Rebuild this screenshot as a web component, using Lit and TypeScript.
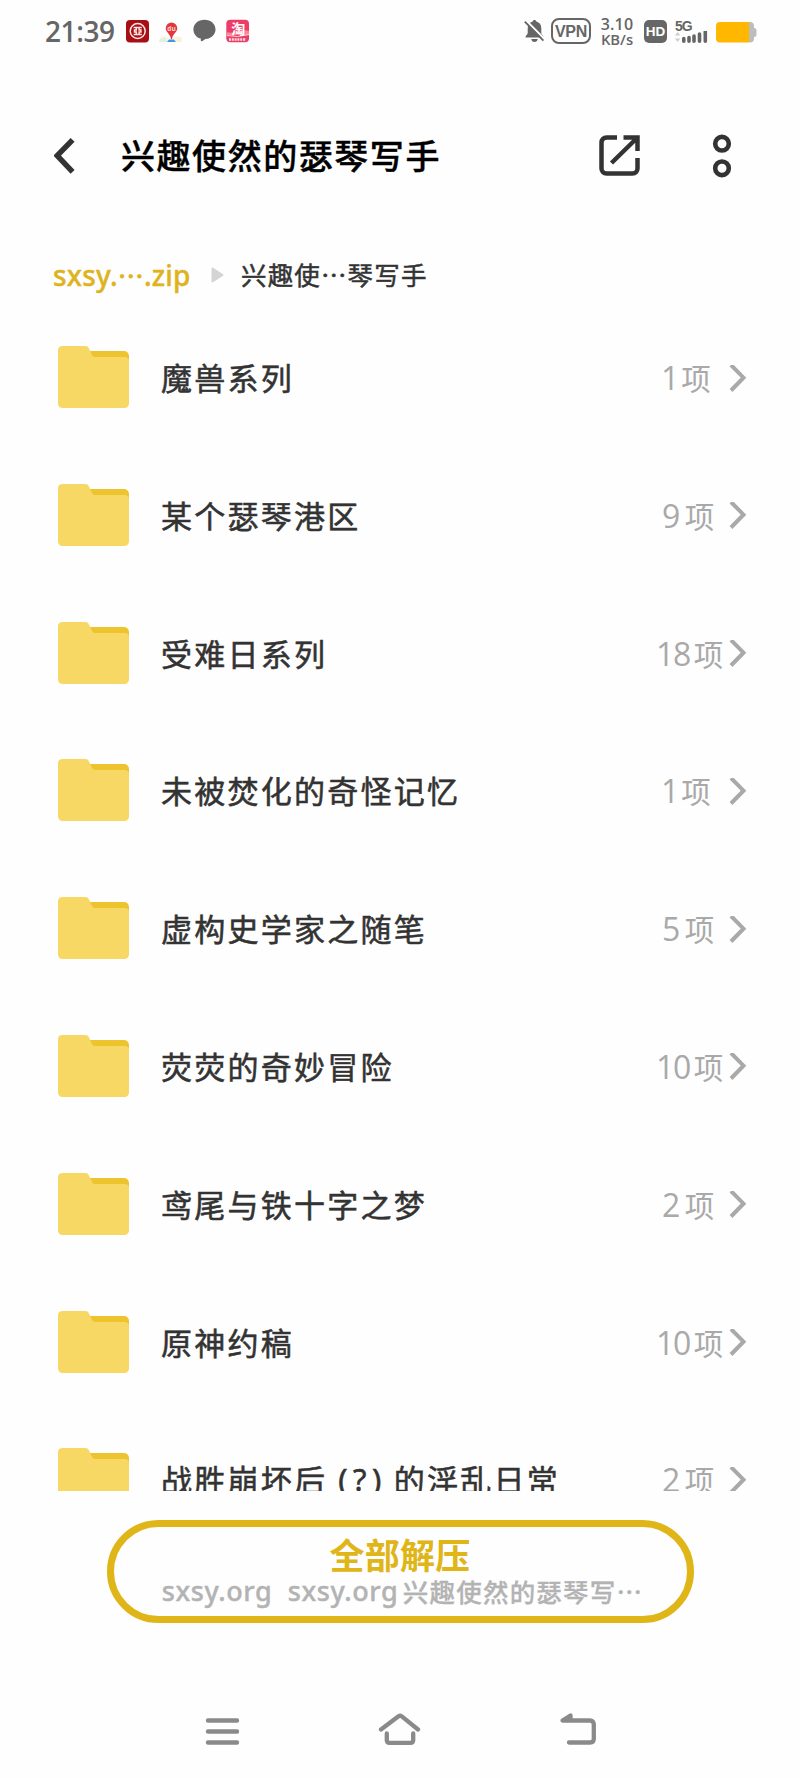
import { LitElement, html, css } from "lit";
import { customElement, property } from "lit/decorators.js";

interface Folder { name: string; note?: string; rest?: string; count: number; }

const FOLDERS: Folder[] = [
  { name: "魔兽系列", count: 1 },
  { name: "某个瑟琴港区", count: 9 },
  { name: "受难日系列", count: 18 },
  { name: "未被焚化的奇怪记忆", count: 1 },
  { name: "虚构史学家之随笔", count: 5 },
  { name: "荧荧的奇妙冒险", count: 10 },
  { name: "鸢尾与铁十字之梦", count: 2 },
  { name: "原神约稿", count: 10 },
  { name: "战胜崩坏后", note: "(?)", rest: "的淫乱日常", count: 2 },
];

@customElement("status-bar")
class StatusBar extends LitElement {
  static styles = css`
    :host { display: flex; align-items: flex-start; height: 64px; color: #666; font-family: "Open Sans", "Noto Sans", sans-serif; }
    svg { display: block; flex: none; }
    .time { width: 80px; margin: 12px 0 0 45px; font-size: 28px; line-height: 38px; font-weight: 600; letter-spacing: -0.4px; white-space: nowrap; }
    .icon { margin-top: 19px; }
    .bank { margin-left: 1px; }
    .map { margin-left: 9px; }
    .chat { margin-left: 10px; }
    .shop { margin-left: 10px; }
    .bell { margin-left: auto; }
    .vpn { box-sizing: border-box; flex: none; width: 40px; height: 26px; margin: 18px 0 0 6px; border: 2px solid #666; border-radius: 8px; font: 700 16px/23px "Liberation Sans", sans-serif; text-align: center; letter-spacing: -0.3px; }
    .speed { flex: none; width: 34px; margin: 17px 0 0 9px; font: 600 16px/14.5px "Open Sans", sans-serif; text-align: center; white-space: nowrap; }
    .speed div { height: 14.5px; }
    .rate { letter-spacing: 0.2px; }
    .unit { font-size: 14.8px; }
    .hd { flex: none; width: 23px; height: 23px; margin: 20px 0 0 10px; border-radius: 5px; background: #666; color: #fff; font: 700 13.5px/23px "Liberation Sans", sans-serif; text-align: center; }
    .cell { flex: none; width: 34px; margin: 19px 0 0 8px; }
    .gen { height: 12px; font: 700 14px/14px "Liberation Sans", sans-serif; letter-spacing: -1px; }
    .battery { margin: 21px 43px 0 6px; }
  `;
  render() {
    return html`
      <div class="time">21:39</div>
      <svg class="icon bank" width="24" height="24" viewBox="0 0 24 24">
        <rect x="0" y="1" width="23" height="22.500" rx="4" fill="#a80f14"/>
        <circle cx="11.700" cy="12" r="7.500" fill="none" stroke="#fbe6e6" stroke-width="1.500"/>
        <path d="M7.600 8.600h8.200M7.600 15.400h8.200M10.300 8.600v2.300h-1.800v2.200h1.800v2.300M13.100 8.600v2.300h1.800v2.200h-1.800v2.300" fill="none" stroke="#fbe6e6" stroke-width="1.500"/>
      </svg>
      <svg class="icon map" width="24" height="24" viewBox="0 0 24 24">
        <path d="M1 18l5-1 6 2 6-2 5 1v5H0z" fill="#f5f6f1"/>
        <path d="M1 20l5-2 3 5H0z" fill="#e3f0dd"/><path d="M16 18l6 1 1 4h-5z" fill="#f7f1d5"/>
        <path d="M10 20.500h5l2 2.500H8z" fill="#4a94dc"/>
        <path d="M12.500 3.500a5.800 5.800 0 0 1 5.800 5.800c0 4-4.400 5.300-5.300 10.700h-1c-.9-5.400-5.300-6.700-5.300-10.700a5.800 5.800 0 0 1 5.800-5.800z" fill="#e3383b"/>
        <text x="12.500" y="11.500" font-size="6.500" font-weight="700" text-anchor="middle" fill="#fbd5d5">du</text>
      </svg>
      <svg class="icon chat" width="23" height="24" viewBox="0 0 23 24">
        <path d="M11.500.8C17.800.8 22.500 5 22.500 10.400S17.500 19.500 12.800 20c-1 .1-2.300 1.700-4.200 2.300-.8.200-.9-.5-.8-2.700C3.400 18.500.4 14.800.4 10.400.4 5 5.200.8 11.500.8z" fill="#666"/>
      </svg>
      <svg class="icon shop" width="24" height="24" viewBox="0 0 24 24">
        <rect x=".3" y=".8" width="22.700" height="22.500" rx="4" fill="#ed3c68"/>
        <path d="M.5 13C8 16 15 9 23 12v4H.5z" fill="#f58a96"/>
        <path d="M1 16.500Q11 19 23 15.500" fill="none" stroke="#ffd2ce" stroke-width="1"/>
        <text x="12.300" y="14.500" font-family="Noto Sans CJK SC" font-size="14" font-weight="700" text-anchor="middle" fill="#fff">淘</text>
        <path d="M3 20.500h17" stroke="#ffdbe0" stroke-width="2.400" stroke-dasharray="2 .8"/>
      </svg>
      <svg class="icon bell" width="21" height="24" viewBox="0 0 21 24">
        <path d="M10.500 1c1 0 1.700.6 1.900 1.600 3 .8 4.900 3.200 4.900 6.400v5.400l2.100 3.100c.3.500 0 1.100-.6 1.100H2.200c-.6 0-.9-.6-.6-1.100l2.100-3.100V9c0-3.200 1.900-5.600 4.900-6.400.2-1 .9-1.600 1.900-1.600zM7.200 20h6.600c-.4 1.900-1.600 3-3.300 3s-2.900-1.100-3.300-3z" fill="#666"/>
        <path d="M2 1.500l19 19" stroke="#fefefe" stroke-width="2.200"/>
        <path d="M.8 2.600l18.600 19" stroke="#666" stroke-width="1.900"/>
      </svg>
      <div class="vpn">VPN</div>
      <div class="speed"><div class="rate">3.10</div><div class="unit">KB/s</div></div>
      <div class="hd">HD</div>
      <div class="cell">
        <div class="gen">5G</div>
        <svg width="34" height="13" viewBox="0 0 34 13">
          <path d="M0 4.500L2.600 1l2.600 3.500zM0 7.500h5.200L2.600 11z" fill="#ccc"/>
          <path d="M8.800 7.500v2.700M14 6.500v3.700M19 5v5.200M24.500 3v7.200M30.300.800v9.400" stroke="#666" stroke-width="3.600" stroke-linecap="round"/>
        </svg>
      </div>
      <svg class="battery" width="42" height="23" viewBox="0 0 42 23">
        <path d="M34 1h1a4 4 0 0 1 4 4v2c2 .2 2.500 1 2.500 2.500v4c0 1.500-.5 2.300-2.500 2.500v1.500a4 4 0 0 1-4 4h-1z" fill="#bdbdbd"/>
        <path d="M5 1h29v20.500H5a4 4 0 0 1-4-4V5a4 4 0 0 1 4-4z" fill="#ffb700"/>
      </svg>`;
  }
}

@customElement("folder-row")
class FolderRow extends LitElement {
  @property({ attribute: false }) folder!: Folder;
  static styles = css`
    :host { display: flex; align-items: flex-start; height: 137.8px; flex: none; }
    svg { display: block; flex: none; }
    .name { display: flex; flex: 1; margin: 8px 0 0 31px; color: #333; font: 400 31px/46px "Noto Sans CJK SC", sans-serif; letter-spacing: 2.25px; white-space: nowrap; -webkit-text-stroke: 0.55px #333; }
    .note { padding: 0 7px 0 11px; letter-spacing: 5.5px; font-family: "Noto Sans", "Noto Sans CJK SC", sans-serif; }
    .count { display: flex; width: 67px; margin-top: 8px; color: #a9a9a9; line-height: 46px; white-space: nowrap; }
    .wide { width: 73px; }
    .num { padding-top: 1px; font-family: "Open Sans", sans-serif; font-size: 32px; margin-right: 4.5px; }
    .unit { font-family: "Noto Sans CJK SC", sans-serif; font-size: 29.5px; }
    .wide .num { letter-spacing: -1.2px; margin-right: 3.5px; }
    .one { margin-left: -1px; margin-right: 2px; }
    .next { margin: 18.5px 53px 0 0; }
  `;
  render() {
    const f = this.folder;
    return html`
      <svg width="73" height="64" viewBox="0 0 73 64">
        <path d="M30 5h37a5 5 0 0 1 5 5v12H30z" fill="#eec42e"/>
        <path d="M5 0h23c3 0 3.600 1.500 4.800 4.200l1.700 3.900c.8 1.800 1.600 2.900 4 2.900H67c3 0 5 1 5 4v42.500a4.500 4.500 0 0 1-4.500 4.500h-62A4.500 4.500 0 0 1 1 57.500V4.500A4.500 4.500 0 0 1 5 0z" fill="#f7d864"/>
      </svg>
      <div class="name"><span>${f.name}</span>${f.note ? html`<span class="note">${f.note}</span><span>${f.rest}</span>` : ""}</div>
      <div class="count ${f.count > 9 ? "wide" : ""}"><span class="num ${f.count === 1 ? "one" : ""}">${f.count}</span><span class="unit">项</span></div>
      <svg class="next" width="18" height="30" viewBox="0 0 18 30">
        <path d="M2 0L14.500 12.700L2 25.500" fill="none" stroke="#a9a9a9" stroke-width="4"/>
      </svg>`;
  }
}

@customElement("app-root")
class AppRoot extends LitElement {
  static styles = css`
    :host { display: flex; flex-direction: column; width: 800px; height: 1778px; overflow: hidden; background: #fefefe; font-family: "Noto Sans CJK SC", sans-serif; }
    svg { display: block; flex: none; }
    .header { display: flex; align-items: center; height: 96px; margin: 43.5px 0 0; padding: 0 68px 0 54px; box-sizing: border-box; }
    .title { flex: 1; margin: -1px 0 0 45px; color: #000; font-size: 34px; line-height: 50px; font-weight: 500; letter-spacing: 1.55px; white-space: nowrap; -webkit-text-stroke: 0.4px #000; }
    .more { margin-left: 72px; }
    .crumbs { display: flex; align-items: center; height: 44px; margin-top: 49.5px; padding-left: 53px; font-size: 25.5px; line-height: 44px; white-space: nowrap; }
    .archive { display: flex; width: 158px; color: #deb31d; font-family: "Noto Sans", sans-serif; font-weight: 500; font-size: 28px; letter-spacing: 0.2px; -webkit-text-stroke: 0.4px #deb31d; }
    .archive .dots { font-family: "Noto Sans CJK SC", sans-serif; font-weight: 400; font-size: 26px; -webkit-text-stroke: 0.8px #deb31d; }
    .here { margin: -2px 0 0 17px; color: #333; letter-spacing: 1.15px; -webkit-text-stroke: 0.5px #333; }
    .list { display: flex; flex-direction: column; height: 1145px; margin-top: 49px; padding-left: 57px; overflow: hidden; }
    .extract { display: flex; flex-direction: column; align-items: center; box-sizing: border-box; width: 587px; height: 102.500px; margin: 29px 0 0 106.500px; border: 7px solid #dfb518; border-radius: 52px; white-space: nowrap; }
    .action { margin-top: 5px; color: #dfb518; font-size: 35px; line-height: 44px; font-weight: 700; letter-spacing: 0.3px; }
    .source { display: flex; color: #b3b3b3; font-size: 25.500px; line-height: 32px; font-weight: 500; margin: -1px 0 0 5px; }
    .site { width: 126px; font-family: "Noto Sans", sans-serif; font-size: 27px; font-weight: 500; letter-spacing: 0.6px; -webkit-text-stroke: 0.4px #b3b3b3; }
    .second { width: 115px; }
    .dest { letter-spacing: 1.2px; -webkit-text-stroke: 0.3px #b3b3b3; }
    .nav { display: flex; align-items: center; height: 40px; margin-top: 88px; padding-left: 205px; }
    .home { margin-left: 138px; }
    .back { margin-left: 138px; }
  `;
  render() {
    return html`
      <status-bar></status-bar>
      <div class="header">
        <svg width="22" height="40" viewBox="0 0 22 40">
          <path d="M18.600 3.800L3.200 19.700L18.600 35.800" fill="none" stroke="#333" stroke-width="5.500"/>
        </svg>
        <h1 class="title">兴趣使然的瑟琴写手</h1>
        <svg width="41" height="41" viewBox="0 0 41 41">
          <path d="M18 2.500H7.500a5 5 0 0 0-5 5v26a5 5 0 0 0 5 5h26a5 5 0 0 0 5-5V23M24.500 2.500h14V16M37.500 3.500L12.500 28" fill="none" stroke="#333" stroke-width="4.500"/>
        </svg>
        <svg class="more" width="20" height="44" viewBox="0 0 20 44">
          <g fill="none" stroke="#333" stroke-width="4.600"><circle cx="10" cy="9.700" r="6.800"/><circle cx="10" cy="34.300" r="6.800"/></g>
        </svg>
      </div>
      <div class="crumbs">
        <span class="archive"><span>sxsy.</span><span class="dots" lang="zh-CN">⋯</span><span>.zip</span></span>
        <svg width="13" height="16" viewBox="0 0 13 16"><path d="M1.500 1.500v13L11.500 8z" fill="#d4d4d4" stroke="#d4d4d4" stroke-width="2" stroke-linejoin="round"/></svg>
        <span class="here">兴趣使⋯琴写手</span>
      </div>
      <div class="list">${FOLDERS.map((f) => html`<folder-row .folder=${f}></folder-row>`)}</div>
      <div class="extract">
        <div class="action">全部解压</div>
        <div class="source"><span class="site">sxsy.org</span><span class="site second">sxsy.org</span><span class="dest">兴趣使然的瑟琴写⋯</span></div>
      </div>
      <div class="nav">
        <svg width="35" height="40" viewBox="0 0 35 40"><path d="M3 9.500h29M3 20.500h29M3 31.500h29" stroke="#8a8a8a" stroke-width="4.400" stroke-linecap="round"/></svg>
        <svg class="home" width="44" height="40" viewBox="0 0 44 40"><path d="M3 18.500L20.500 5.200q1.500-1.100 3 0L40 18.500M8.800 22.500v6.500q0 2.800 2.800 2.800h20.800q2.800 0 2.800-2.800v-6.500" fill="none" stroke="#8a8a8a" stroke-width="4.300" stroke-linecap="round" stroke-linejoin="round"/></svg>
        <svg class="back" width="38" height="40" viewBox="0 0 38 40"><path d="M9 31.500h21q3.800 0 3.800-3.800V13.300q0-3.800-3.800-3.800H2.500L10.500 4.500V9" fill="none" stroke="#8a8a8a" stroke-width="4.300" stroke-linecap="round" stroke-linejoin="round"/></svg>
      </div>`;
  }
}
